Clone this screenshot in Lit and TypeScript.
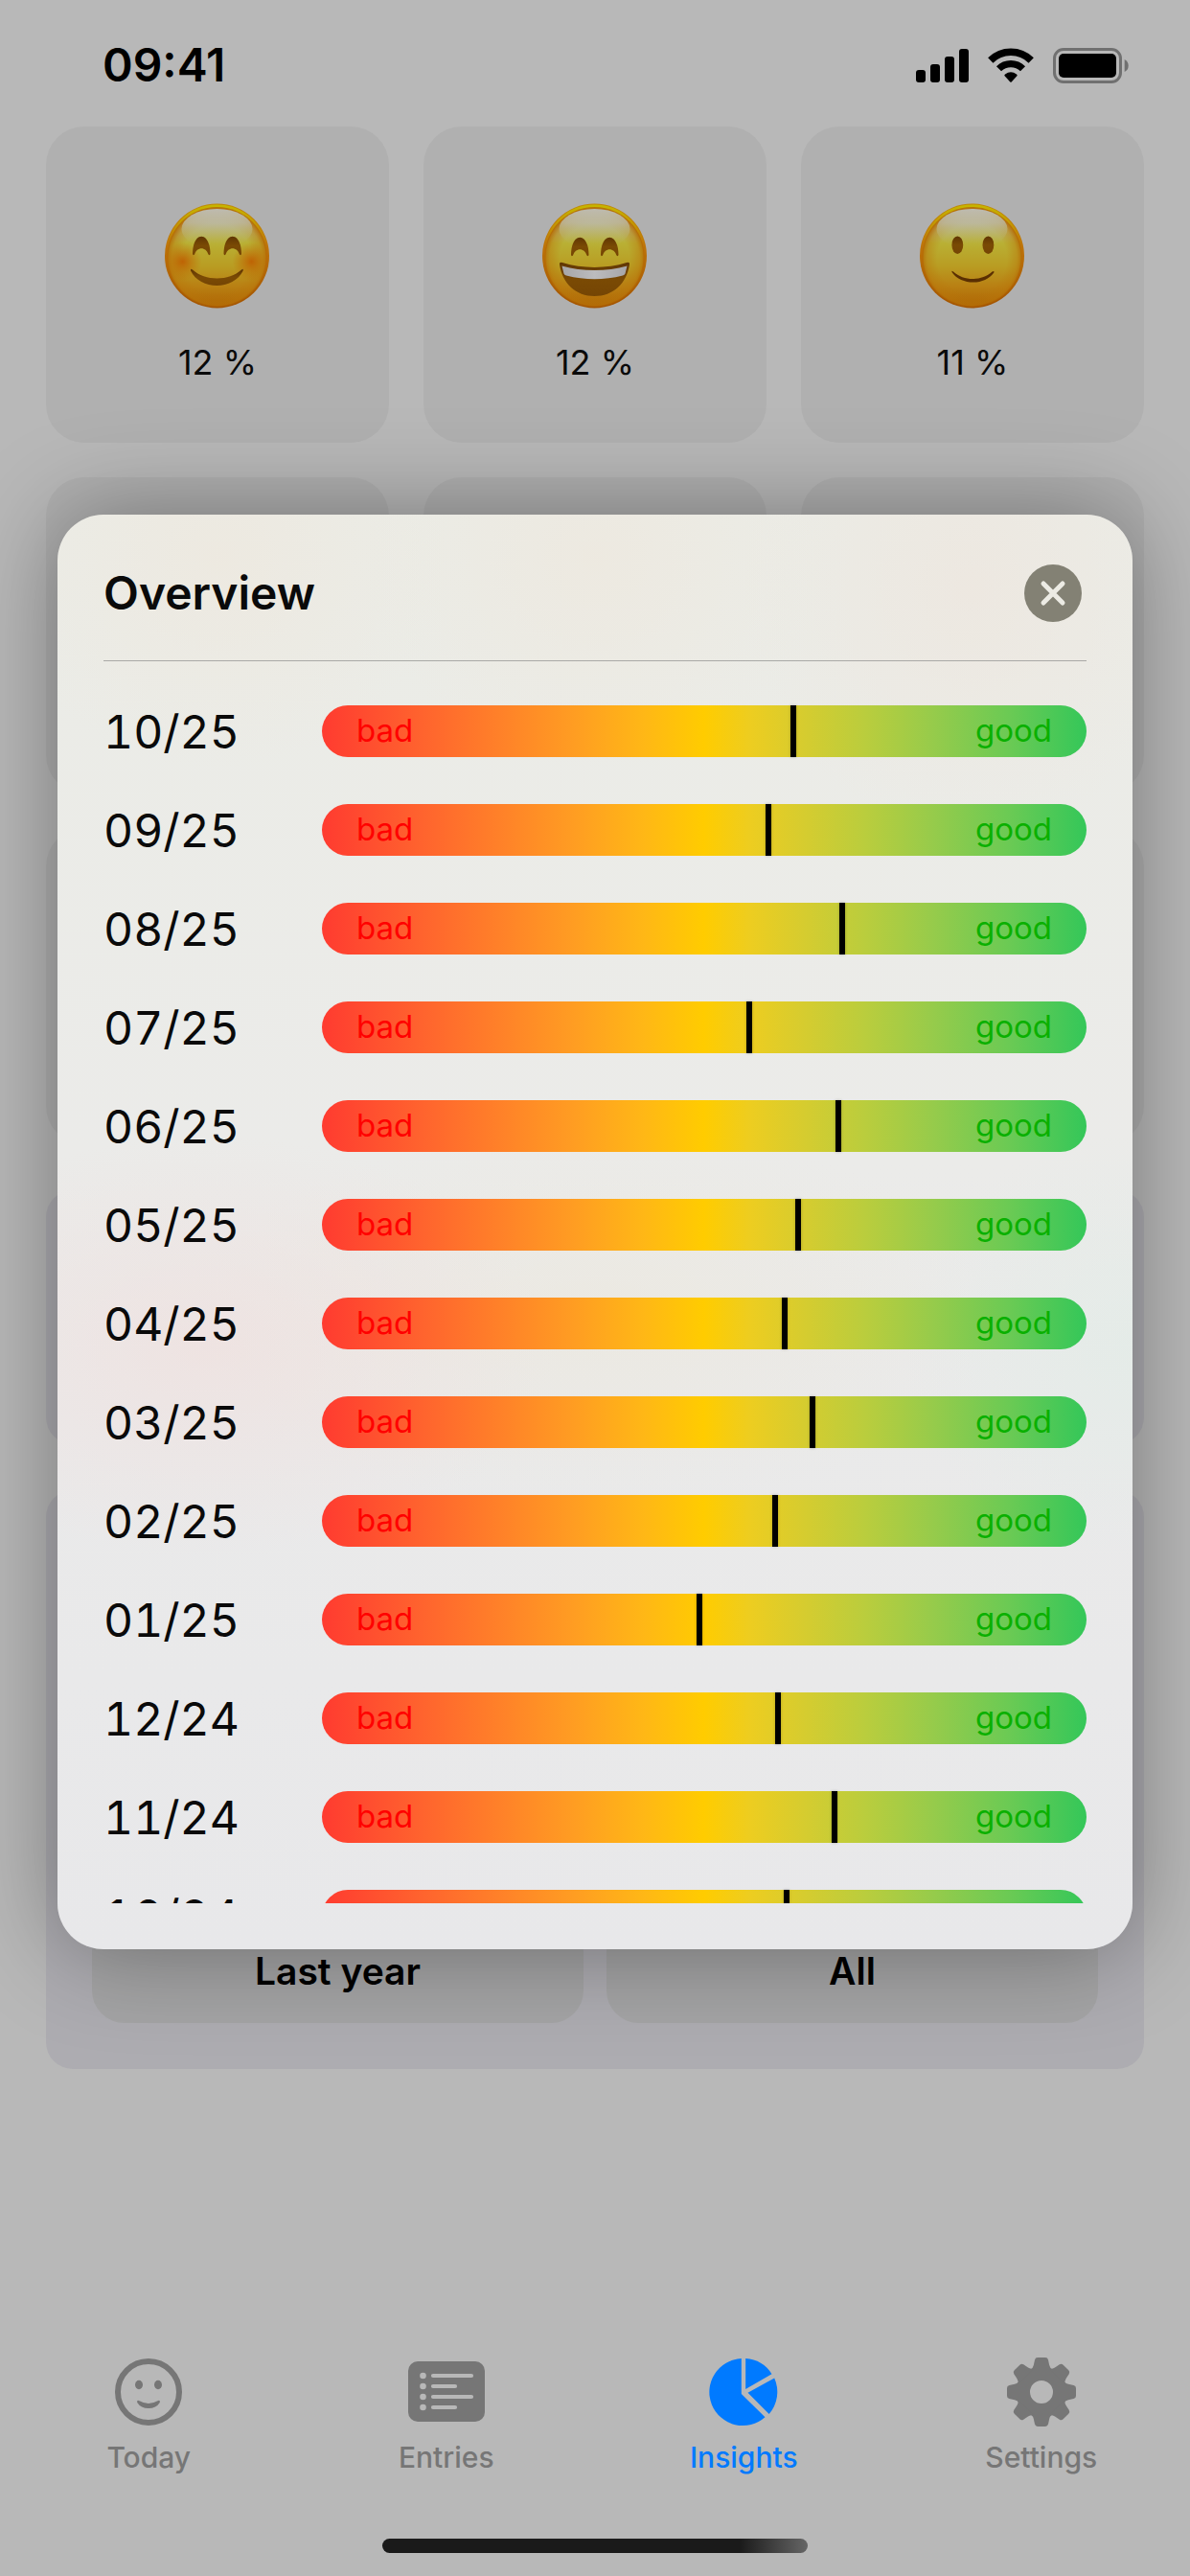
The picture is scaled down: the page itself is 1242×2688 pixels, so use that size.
import { LitElement, html, svg, css, nothing } from "lit";
import { customElement, property, state } from "lit/decorators.js";

type Mood = "blush" | "grin" | "smile";

interface MonthScore {
  label: string;
  score: number;
}

const MOODS: { mood: Mood; share: string }[] = [
  { mood: "blush", share: "12 %" },
  { mood: "grin", share: "12 %" },
  { mood: "smile", share: "11 %" },
];

const MONTHS: MonthScore[] = [
  { label: "10/25", score: 61.7 },
  { label: "09/25", score: 58.4 },
  { label: "08/25", score: 68 },
  { label: "07/25", score: 55.9 },
  { label: "06/25", score: 67.5 },
  { label: "05/25", score: 62.3 },
  { label: "04/25", score: 60.5 },
  { label: "03/25", score: 64.2 },
  { label: "02/25", score: 59.3 },
  { label: "01/25", score: 49.4 },
  { label: "12/24", score: 59.6 },
  { label: "11/24", score: 67 },
  { label: "10/24", score: 60.8 },
];

const arch = svg`<path d="M29 53C29 28.500 47.500 28.500 47.500 53Q47 55 45.500 53.500C43 45 33.500 45 31 53.500Q29.500 55 29 53Z"/>`;

@customElement("mood-face")
class MoodFace extends LitElement {
  @property() mood: Mood = "smile";

  static styles = css`
    :host {
      display: block;
      width: 110px;
      height: 110px;
    }
    .face {
      display: block;
      width: 100%;
      height: 100%;
      overflow: visible;
    }
  `;

  private features() {
    if (this.mood === "blush") {
      return svg`
        <circle cx="18.500" cy="61" r="20" fill="url(#cheek)"/>
        <circle cx="90.500" cy="61" r="20" fill="url(#cheek)"/>
        <g fill="url(#ink)">${arch}<g transform="translate(32.500 0)">${arch}</g></g>
        <path fill="url(#ink)" d="M27 70.500Q26.500 67.500 29 69.500C42 81.500 67 81.500 80 69.500Q82.300 67.500 81.700 70.500C72 91 36.500 91 27 70.500Z"/>`;
    }
    if (this.mood === "grin") {
      return svg`
        <g fill="url(#ink)"><g transform="translate(1 1)">${arch}</g><g transform="translate(32 1)">${arch}</g></g>
        <path fill="url(#ink)" d="M18 64Q17.500 61 21 62C42 68.500 67 68.500 88 62Q91.500 61 91 64C88 84 74 97 54.500 97C35 97 21 84 18 64Z"/>
        <path fill="url(#teeth)" d="M20.500 65.500C42 71.500 67 71.500 88.500 65.500L86.500 73.500Q85.800 75 84 75.500C64 80.500 45 80.500 25 75.500Q23 75 22.500 73.500Z"/>`;
    }
    return svg`
      <ellipse cx="39.300" cy="43.700" rx="5.900" ry="9.300" fill="url(#ink)"/>
      <ellipse cx="71.400" cy="43.700" rx="5.900" ry="9.300" fill="url(#ink)"/>
      <path fill="#5a2f02" d="M33.500 72Q33 70 35 71.500C46 81.500 64.500 81.500 75.500 71.500Q78 70 77.300 72.500C68 86 43 86 33.500 72Z"/>`;
  }

  render() {
    return html`<svg class="face" viewBox="0 0 110 110" aria-hidden="true">
      <defs>
        <linearGradient id="rim" x1="0" y1="0" x2="0" y2="1">
          <stop offset="0" stop-color="#bf8a06" />
          <stop offset="0.4" stop-color="#be7409" />
          <stop offset="1" stop-color="#a25300" />
        </linearGradient>
        <linearGradient id="skin" x1="0" y1="0" x2="0" y2="1">
          <stop offset="0" stop-color="#bcb9a6" />
          <stop offset="0.14" stop-color="#bab692" />
          <stop offset="0.36" stop-color="#b9b034" />
          <stop offset="0.6" stop-color="#b99c22" />
          <stop offset="0.8" stop-color="#b98013" />
          <stop offset="1" stop-color="#ad6504" />
        </linearGradient>
        <radialGradient id="edge" cx="0.5" cy="0.52" r="0.5">
          <stop offset="0.7" stop-color="#b97409" stop-opacity="0" />
          <stop offset="0.9" stop-color="#b97409" stop-opacity="0.4" />
          <stop offset="1" stop-color="#b46a05" stop-opacity="0.85" />
        </radialGradient>
        <linearGradient id="glow" x1="0" y1="0" x2="0" y2="1">
          <stop offset="0" stop-color="#c6b400" />
          <stop offset="0.4" stop-color="#c6a000" stop-opacity="0" />
        </linearGradient>
        <linearGradient id="shine" x1="0" y1="0" x2="0" y2="1">
          <stop offset="0" stop-color="#bebcb2" />
          <stop offset="0.35" stop-color="#bcb9a0" stop-opacity="0.8" />
          <stop offset="1" stop-color="#b9b034" stop-opacity="0" />
        </linearGradient>
        <radialGradient id="cheek">
          <stop offset="0" stop-color="#bf5c00" stop-opacity="0.9" />
          <stop offset="1" stop-color="#bf6800" stop-opacity="0" />
        </radialGradient>
        <linearGradient id="ink" x1="0" y1="0" x2="0" y2="1">
          <stop offset="0" stop-color="#5f3503" />
          <stop offset="0.5" stop-color="#7a4a04" />
          <stop offset="1" stop-color="#754504" />
        </linearGradient>
        <linearGradient id="teeth">
          <stop offset="0" stop-color="#a6a6a8" />
          <stop offset="0.5" stop-color="#bcbcbe" />
          <stop offset="1" stop-color="#a6a6a8" />
        </linearGradient>
      </defs>
      <circle cx="54.500" cy="55" r="54.500" fill="url(#rim)" />
      <circle cx="54.500" cy="55" r="51.500" fill="none" stroke="url(#glow)" stroke-width="4" />
      <circle cx="54.500" cy="56" r="51" fill="url(#skin)" />
      <circle cx="54.500" cy="56" r="52" fill="url(#edge)" />
      <ellipse cx="54.500" cy="27" rx="37" ry="21" fill="url(#shine)" />
      ${this.features()}
    </svg>`;
  }
}

@customElement("status-bar")
class StatusBar extends LitElement {
  static styles = css`
    :host {
      display: flex;
      align-items: center;
      justify-content: space-between;
      box-sizing: border-box;
      height: 132px;
      padding: 4px 64px 0 107px;
      color: #000;
    }
    .time {
      font-size: 48px;
      line-height: 56px;
      font-weight: 600;
    }
    .icons {
      display: flex;
      align-items: center;
      gap: 20px;
    }
    .icon {
      display: block;
    }
  `;

  render() {
    return html`
      <span class="time">09:41</span>
      <div class="icons">
        <svg class="icon" width="55" height="37" viewBox="0 0 55 37" aria-hidden="true">
          <rect x="0" y="23" width="10" height="13" rx="3" />
          <rect x="15" y="17" width="10" height="19" rx="3" />
          <rect x="30" y="9" width="10" height="27" rx="3" />
          <rect x="45" y="1" width="10" height="35" rx="3" />
        </svg>
        <svg class="icon" width="48" height="37" viewBox="0 0 48 37" aria-hidden="true">
          <g fill="none" stroke="#000">
            <path stroke-width="7.600" d="M2.800 13A30.200 30.200 0 0 1 45.200 13" />
            <path stroke-width="7.200" d="M11.500 21.800A17.700 17.700 0 0 1 36.500 21.800" />
          </g>
          <path d="M17.600 29.300Q16.700 28.200 18 27.400A10.500 10.500 0 0 1 30 27.400Q31.300 28.200 30.400 29.300L24.700 35.400Q24 36 23.300 35.400Z" />
        </svg>
        <svg class="icon" width="79" height="37" viewBox="0 0 79 37" aria-hidden="true">
          <rect x="1.500" y="1.500" width="69" height="34" rx="9.500" fill="none" stroke="#707070" stroke-width="3" />
          <rect x="6" y="6" width="60" height="25" rx="5" />
          <path d="M74.700 12Q78.700 14 78.700 18.500T74.700 25Z" fill="#707070" />
        </svg>
      </div>
    `;
  }
}

@customElement("score-bar")
class ScoreBar extends LitElement {
  @property({ type: Number }) score = 50;

  static styles = css`
    :host {
      display: block;
    }
    .track {
      position: relative;
      display: flex;
      align-items: center;
      justify-content: space-between;
      height: 52px;
      padding: 0 36px 2px;
      border-radius: 27px;
      background: linear-gradient(
        90deg,
        #ff3b30,
        #ff632e 13%,
        #ff8029 23%,
        #ff9d22 33%,
        #ffb716 42%,
        #ffcc00 50%,
        #edcd20 56%,
        #d6cc2f 63%,
        #bacd3d 71%,
        #96cb4b 80%,
        #6aca54 90%,
        #34c759
      );
      font-size: 33px;
      line-height: 50px;
    }
    .bad {
      color: #ff0000;
    }
    .good {
      color: #0ab000;
    }
    .marker {
      position: absolute;
      top: 0;
      bottom: 0;
      width: 6px;
      margin-left: -3px;
      background: #000;
      box-shadow: 0 0 3px rgba(0, 0, 0, 0.25);
    }
  `;

  render() {
    return html`<div
      class="track"
      role="meter"
      aria-valuemin="0"
      aria-valuemax="100"
      aria-valuenow=${this.score}
    >
      <span class="bad">bad</span>
      <span class="good">good</span>
      <span class="marker" style="left:${this.score}%"></span>
    </div>`;
  }
}

@customElement("overview-dialog")
class OverviewDialog extends LitElement {
  static styles = css`
    :host {
      display: flex;
      flex: 1;
      min-height: 0;
    }
    .dialog {
      flex: 1;
      display: flex;
      flex-direction: column;
      min-height: 0;
      padding: 0 48px 48px;
      border-radius: 48px;
      color: #0a0a0a;
      background:
        radial-gradient(ellipse 240px 220px at 15% 3%, rgba(238, 232, 222, 0.7), transparent),
        radial-gradient(ellipse 240px 220px at 50% 3%, rgba(238, 232, 222, 0.7), transparent),
        radial-gradient(ellipse 240px 260px at 85% 5%, rgba(238, 230, 222, 0.7), transparent),
        radial-gradient(ellipse 360px 220px at 14% 58%, rgba(240, 224, 222, 0.7), transparent),
        radial-gradient(ellipse 240px 220px at 100% 58%, rgba(226, 236, 231, 0.7), transparent),
        radial-gradient(ellipse 420px 200px at 50% 56%, rgba(236, 232, 222, 0.7), transparent),
        linear-gradient(#ebece6, #ebebe9 45%, #eaeaea 62%, #e8e8ea);
      box-shadow: 0 0 100px rgba(0, 0, 0, 0.36);
    }
    .head {
      display: flex;
      align-items: center;
      justify-content: space-between;
      box-sizing: border-box;
      height: 153px;
      padding: 12px 5px 0 0;
      border-bottom: 1px solid #a9a9a6;
    }
    .title {
      margin: 0;
      font-size: 48px;
      line-height: 60px;
      font-weight: 600;
    }
    .close {
      display: block;
      width: 60px;
      height: 60px;
      padding: 0;
      border: 0;
      border-radius: 50%;
      background: #838174;
    }
    .cross {
      display: block;
    }
    .list {
      flex: 1 1 0;
      min-height: 0;
      overflow: hidden;
      display: flex;
      flex-direction: column;
      gap: 49px;
      margin: 0;
      padding: 46px 0 0;
      list-style: none;
    }
    .row {
      flex: none;
      display: grid;
      grid-template-columns: 228px 1fr;
      align-items: center;
    }
    .month {
      padding-top: 2px;
      font-size: 48px;
      line-height: 52px;
      font-variant-numeric: tabular-nums;
    }
  `;

  private close() {
    this.dispatchEvent(new CustomEvent("close"));
  }

  render() {
    return html`<section class="dialog" role="dialog" aria-labelledby="title">
      <header class="head">
        <h1 class="title" id="title">Overview</h1>
        <button class="close" type="button" aria-label="Close" @click=${this.close}>
          <svg class="cross" width="60" height="60" viewBox="0 0 60 60" aria-hidden="true">
            <path d="M20 20L40 40M40 20L20 40" stroke="#ecebe4" stroke-width="5" stroke-linecap="round" />
          </svg>
        </button>
      </header>
      <ul class="list">
        ${MONTHS.map(
          (m) => html`<li class="row">
            <span class="month">${m.label}</span>
            <score-bar .score=${m.score}></score-bar>
          </li>`,
        )}
      </ul>
    </section>`;
  }
}

@customElement("tab-bar")
class TabBar extends LitElement {
  @state() private active = "Insights";

  static styles = css`
    :host {
      display: block;
      padding-bottom: 24px;
    }
    .tabs {
      display: grid;
      grid-template-columns: repeat(4, 1fr);
    }
    .tab {
      display: flex;
      flex-direction: column;
      align-items: center;
      gap: 14px;
      padding: 0;
      border: 0;
      background: none;
      color: #767676;
      font: inherit;
      font-size: 30px;
      line-height: 36px;
      font-weight: 500;
    }
    .active {
      color: #007aff;
    }
    .icon {
      display: block;
      overflow: visible;
    }
    .home {
      width: 444px;
      height: 15px;
      margin: 67px auto 0;
      border-radius: 8px;
      background: linear-gradient(90deg, #1a1a1a 84%, #666 100%);
    }
  `;

  private icon(name: string) {
    switch (name) {
      case "Today":
        return svg`<g transform="translate(5 1)">
          <circle cx="35" cy="35" r="32" fill="none" stroke="currentColor" stroke-width="6"/>
          <ellipse cx="25" cy="27.500" rx="4" ry="4.700"/><ellipse cx="45" cy="27.500" rx="4" ry="4.700"/>
          <path d="M23.200 46Q22.500 43 25.500 44.200Q35 49.600 44.500 44.200Q47.500 43 46.800 46Q43 52 35 52T23.200 46Z"/>
        </g>`;
      case "Entries":
        return svg`<g transform="translate(0 4)">
          <rect width="80" height="63" rx="10"/>
          <g fill="#b8b8b8">
            <circle cx="15.500" cy="15" r="3.300"/><circle cx="15.500" cy="26" r="3.300"/>
            <circle cx="15.500" cy="37" r="3.300"/><circle cx="15.500" cy="48" r="3.300"/>
          </g>
          <path d="M26 15H66M26 26H49M26 37H66M26 48H49" stroke="#b8b8b8" stroke-width="4.200" stroke-linecap="round"/>
        </g>`;
      case "Insights":
        return svg`<g transform="translate(5.500 1)">
          <path d="M32.300 0.100A35 35 0 1 0 57 61.300L32.300 37Z"/>
          <path d="M36.700 0.100A35 35 0 0 1 64 16.300L36.700 31.900Z"/>
          <path d="M39 35.700L66.700 20.600A35 35 0 0 1 61.200 58Z"/>
        </g>`;
      default:
        return svg`<g transform="translate(40 36)">
          <circle r="19" fill="none" stroke="currentColor" stroke-width="14"/>
          ${[0, 45, 90, 135, 180, 225, 270, 315].map(
            (a) => svg`<path transform="rotate(${a})" d="M-11.500 -23Q-8.700 -25.500 -8.200 -28L-7 -33.600Q-6.400 -36 -4 -36H4Q6.400 -36 7 -33.600L8.200 -28Q8.700 -25.500 11.500 -23Z"/>`,
          )}
        </g>`;
    }
  }

  render() {
    return html`
      <nav class="tabs">
        ${["Today", "Entries", "Insights", "Settings"].map(
          (name) => html`<button
            type="button"
            class="tab ${name === this.active ? "active" : ""}"
            @click=${() => (this.active = name)}
          >
            <svg class="icon" width="80" height="72" viewBox="0 0 80 72" fill="currentColor" aria-hidden="true">
              ${this.icon(name)}
            </svg>
            <span>${name}</span>
          </button>`,
        )}
      </nav>
      <div class="home"></div>
    `;
  }
}

@customElement("app-root")
class AppRoot extends LitElement {
  @state() private dialogOpen = true;

  static styles = css`
    :host {
      position: relative;
      display: flex;
      flex-direction: column;
      min-height: 100vh;
      background: #b8b8b8;
      color: #0a0a0a;
      font-family: Inter, "Liberation Sans", sans-serif;
    }
    .content {
      flex: 1;
      display: flex;
      flex-direction: column;
      gap: 48px;
      padding: 0 48px;
    }
    .cards {
      display: grid;
      grid-template-columns: repeat(3, 1fr);
      grid-auto-rows: 330px;
      gap: 36px;
    }
    .card {
      display: flex;
      flex-direction: column;
      align-items: center;
      gap: 32px;
      box-sizing: border-box;
      padding-top: 80px;
      border-radius: 40px;
      background: #b0b0b0;
    }
    .share {
      font-size: 36px;
      line-height: 48px;
    }
    .panel {
      box-sizing: border-box;
      min-height: 265px;
      border-radius: 28px;
      background: #adacb1;
    }
    .periods {
      display: grid;
      grid-template-columns: 1fr 1fr;
      align-content: end;
      gap: 24px;
      min-height: 604px;
      padding: 48px;
    }
    .period {
      height: 108px;
      padding: 0;
      border: 0;
      border-radius: 34px;
      background: #a4a4a5;
      color: #000;
      font: inherit;
      font-size: 39px;
      line-height: 48px;
      font-weight: 600;
    }
    .overlay {
      position: absolute;
      inset: 0;
      display: flex;
      padding: 537px 60px 654px;
      overflow: hidden;
      pointer-events: none;
    }
    .popup {
      pointer-events: auto;
    }
  `;

  render() {
    return html`
      <status-bar></status-bar>
      <main class="content">
        <div class="cards">
          ${MOODS.map(
            (m) => html`<div class="card">
              <mood-face .mood=${m.mood}></mood-face>
              <span class="share">${m.share}</span>
            </div>`,
          )}
          ${[1, 2, 3, 4, 5, 6].map(() => html`<div class="card"></div>`)}
        </div>
        <div class="panel"></div>
        <div class="panel periods">
          <button class="period" type="button">Last year</button>
          <button class="period" type="button">All</button>
        </div>
      </main>
      <tab-bar></tab-bar>
      ${this.dialogOpen
        ? html`<div class="overlay">
            <overview-dialog class="popup" @close=${() => (this.dialogOpen = false)}></overview-dialog>
          </div>`
        : nothing}
    `;
  }
}
